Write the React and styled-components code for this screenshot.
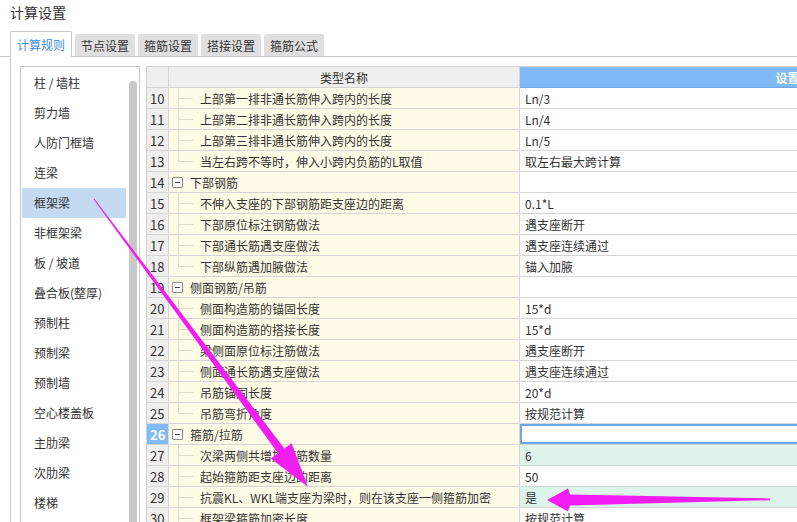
import React from 'react';
import styled, { createGlobalStyle } from 'styled-components';

const GlobalStyle = createGlobalStyle`
  html, body {
    margin: 0;
    padding: 0;
    background: #ffffff;
  }
  body {
    font-family: "Noto Sans CJK SC", "Noto Sans", sans-serif;
    color: #333333;
  }
`;

const sideItems = [
  '柱 / 墙柱',
  '剪力墙',
  '人防门框墙',
  '连梁',
  '框架梁',
  '非框架梁',
  '板 / 坡道',
  '叠合板(整厚)',
  '预制柱',
  '预制梁',
  '预制墙',
  '空心楼盖板',
  '主肋梁',
  '次肋梁',
  '楼梯',
];

const tabs = ['计算规则', '节点设置', '箍筋设置', '搭接设置', '箍筋公式'];

const rows = [
  { no: 10, name: '上部第一排非通长筋伸入跨内的长度', value: 'Ln/3' },
  { no: 11, name: '上部第二排非通长筋伸入跨内的长度', value: 'Ln/4' },
  { no: 12, name: '上部第三排非通长筋伸入跨内的长度', value: 'Ln/5' },
  { no: 13, name: '当左右跨不等时，伸入小跨内负筋的L取值', value: '取左右最大跨计算', last: true },
  { no: 14, name: '下部钢筋', group: true },
  { no: 15, name: '不伸入支座的下部钢筋距支座边的距离', value: '0.1*L' },
  { no: 16, name: '下部原位标注钢筋做法', value: '遇支座断开' },
  { no: 17, name: '下部通长筋遇支座做法', value: '遇支座连续通过' },
  { no: 18, name: '下部纵筋遇加腋做法', value: '锚入加腋', last: true },
  { no: 19, name: '侧面钢筋/吊筋', group: true },
  { no: 20, name: '侧面构造筋的锚固长度', value: '15*d' },
  { no: 21, name: '侧面构造筋的搭接长度', value: '15*d' },
  { no: 22, name: '梁侧面原位标注筋做法', value: '遇支座断开' },
  { no: 23, name: '侧面通长筋遇支座做法', value: '遇支座连续通过' },
  { no: 24, name: '吊筋锚固长度', value: '20*d' },
  { no: 25, name: '吊筋弯折角度', value: '按规范计算', last: true },
  { no: 26, name: '箍筋/拉筋', group: true, selected: true },
  { no: 27, name: '次梁两侧共增加箍筋数量', value: '6', green: true },
  { no: 28, name: '起始箍筋距支座边的距离', value: '50' },
  { no: 29, name: '抗震KL、WKL端支座为梁时，则在该支座一侧箍筋加密', value: '是', green: true },
  { no: 30, name: '框架梁箍筋加密长度', value: '按规范计算' },
];

const App = () => {
  return (
    <Page>
      <GlobalStyle />
      <Title>计算设置</Title>

      <TabBar>
        {tabs.map((t, i) => (
          <Tab key={t} active={i === 0 ? 'true' : undefined}>
            {t}
          </Tab>
        ))}
      </TabBar>

      <Body>
        <Sidebar>
          <SideList>
            {sideItems.map(item => (
              <SideItem key={item} selected={item === '框架梁' ? 'true' : undefined}>
                {item}
              </SideItem>
            ))}
          </SideList>
          <ScrollTrack>
            <ScrollThumb />
          </ScrollTrack>
        </Sidebar>

        <Table>
          <Row>
            <NoCell header="true" />
            <NameCell header="true">
              <HeaderLabel>类型名称</HeaderLabel>
            </NameCell>
            <ValueCell header="true">
              <HeaderLabel>设置值</HeaderLabel>
            </ValueCell>
          </Row>

          {rows.map(r => (
            <Row key={r.no}>
              <NoCell selected={r.selected ? 'true' : undefined}>{r.no}</NoCell>
              <NameCell>
                {r.group ? (
                  <>
                    <Collapse>
                      <Minus />
                    </Collapse>
                    <GroupText>{r.name}</GroupText>
                  </>
                ) : (
                  <>
                    <Guide>
                      <GuideTop />
                      <GuideBottom last={r.last ? 'true' : undefined} />
                    </Guide>
                    <ItemText>{r.name}</ItemText>
                  </>
                )}
              </NameCell>
              <ValueCell
                green={r.green ? 'true' : undefined}
                selected={r.selected ? 'true' : undefined}
              >
                {r.value}
              </ValueCell>
            </Row>
          ))}
        </Table>
      </Body>

      <Overlay viewBox="0 0 797 522" width="797" height="522">
        <polygon
          points="93.6,199.3 278,453.3 270.8,458.6 308,487 291.6,443.2 284.4,448.5 94.4,198.7"
          fill="#f01ef0"
        />
        <polygon
          points="547,500 568,488.5 570,494.5 770,498.4 770,500.2 570,505.5 568,511.5"
          fill="#f01ef0"
        />
      </Overlay>
    </Page>
  );
};

const Page = styled.div`
  position: relative;
  width: 797px;
  height: 522px;
  overflow: hidden;
  display: flex;
  flex-direction: column;
  font-size: 12px;
`;

const Title = styled.div`
  height: 24px;
  line-height: 24px;
  padding-left: 10px;
  font-size: 14px;
  color: #333333;
`;

const TabBar = styled.div`
  display: flex;
  align-items: flex-end;
  gap: 3px;
  margin-top: 7px;
  height: 25px;
  padding-left: 10px;
  border-bottom: 1px solid #c9c9c9;
`;

const Tab = styled.div`
  box-sizing: border-box;
  display: flex;
  align-items: center;
  justify-content: center;
  width: ${props => (props.active ? '62px' : '60px')};
  height: ${props => (props.active ? '26px' : '22px')};
  margin-bottom: ${props => (props.active ? '-1px' : '0')};
  background: ${props => (props.active ? '#ffffff' : '#dfdfdf')};
  border: ${props => (props.active ? '1px solid #c9c9c9' : 'none')};
  border-bottom: none;
  border-radius: 2px 2px 0 0;
  color: ${props => (props.active ? '#3b8de3' : '#333333')};
  font-size: 12px;
`;

const Body = styled.div`
  flex: 1;
  min-height: 0;
  display: flex;
  gap: 6px;
  margin-left: 10px;
  padding: 9px 0 0 9px;
  border-left: 1px solid #c9c9c9;
  overflow: hidden;
`;

const Sidebar = styled.div`
  box-sizing: border-box;
  flex: none;
  width: 120px;
  display: flex;
  border: 1px solid #c9c9c9;
  border-bottom: none;
`;

const SideList = styled.div`
  flex: 1;
  display: flex;
  flex-direction: column;
  padding: 1px 2px 0 1px;
`;

const SideItem = styled.div`
  height: 30px;
  line-height: 30px;
  padding-left: 12px;
  white-space: nowrap;
  color: #333333;
  background: ${props => (props.selected ? '#c3daf1' : 'transparent')};
`;

const ScrollTrack = styled.div`
  flex: none;
  width: 11px;
  display: flex;
  padding-top: 14px;
`;

const ScrollThumb = styled.div`
  width: 8px;
  margin-left: 1px;
  background: #c8c8c8;
  border-radius: 4px 4px 0 0;
`;

const Table = styled.div`
  flex: none;
  display: flex;
  flex-direction: column;
  border-left: 1px solid #d2d2d2;
  border-top: 1px solid #d2d2d2;
`;

const Row = styled.div`
  display: flex;
  height: 21px;
`;

const cellBase = `
  box-sizing: border-box;
  height: 21px;
  display: flex;
  align-items: center;
  border-right: 1px solid #d5d5d5;
  border-bottom: 1px solid #d5d5d5;
  white-space: nowrap;
  overflow: hidden;
`;

const NoCell = styled.div`
  ${cellBase}
  width: 22px;
  padding-left: 3px;
  font-size: 13px;
  background: ${props => (props.selected ? '#7fbaf6' : '#efefef')};
  color: ${props => (props.selected ? '#ffffff' : '#333333')};
  font-weight: ${props => (props.selected ? 700 : 400)};
`;

const NameCell = styled.div`
  ${cellBase}
  width: 351px;
  justify-content: ${props => (props.header ? 'center' : 'flex-start')};
  background: ${props => (props.header ? '#efefef' : '#fffbe6')};
`;

const ValueCell = styled.div`
  ${cellBase}
  width: 548px;
  padding-left: ${props => (props.header ? '0' : '5px')};
  justify-content: ${props => (props.header ? 'center' : 'flex-start')};
  background: ${props =>
    props.header ? '#7fbaf6' : props.green ? '#dcf4ea' : '#ffffff'};
  color: ${props => (props.header ? '#ffffff' : '#333333')};
  font-weight: ${props => (props.header ? 700 : 400)};
  border-bottom-color: ${props => (props.header ? '#6ea6e6' : '#d5d5d5')};
  box-shadow: ${props => (props.selected ? 'inset 0 0 0 2px #6ea8e4' : 'none')};
`;

const HeaderLabel = styled.span`
  font-size: 12px;
`;

const Guide = styled.div`
  flex: none;
  align-self: stretch;
  display: flex;
  flex-direction: column;
  width: 15px;
  margin-left: 9px;
  margin-right: 7px;
`;

const GuideTop = styled.div`
  height: 10px;
  border-left: 1px solid #dedbc9;
  border-bottom: 1px solid #dedbc9;
`;

const GuideBottom = styled.div`
  flex: 1;
  border-left: ${props => (props.last ? 'none' : '1px solid #dedbc9')};
`;

const ItemText = styled.span`
  color: #333333;
`;

const Collapse = styled.span`
  box-sizing: border-box;
  flex: none;
  display: flex;
  align-items: center;
  justify-content: center;
  width: 11px;
  height: 11px;
  margin-left: 3px;
  margin-right: 7px;
  border: 1px solid #8a8a8a;
  border-radius: 1px;
  background: #ffffff;
`;

const Minus = styled.span`
  width: 5px;
  height: 1px;
  background: #444444;
`;

const GroupText = styled.span`
  color: #333333;
`;

const Overlay = styled.svg`
  position: absolute;
  left: 0;
  top: 0;
  pointer-events: none;
`;

export default App;
